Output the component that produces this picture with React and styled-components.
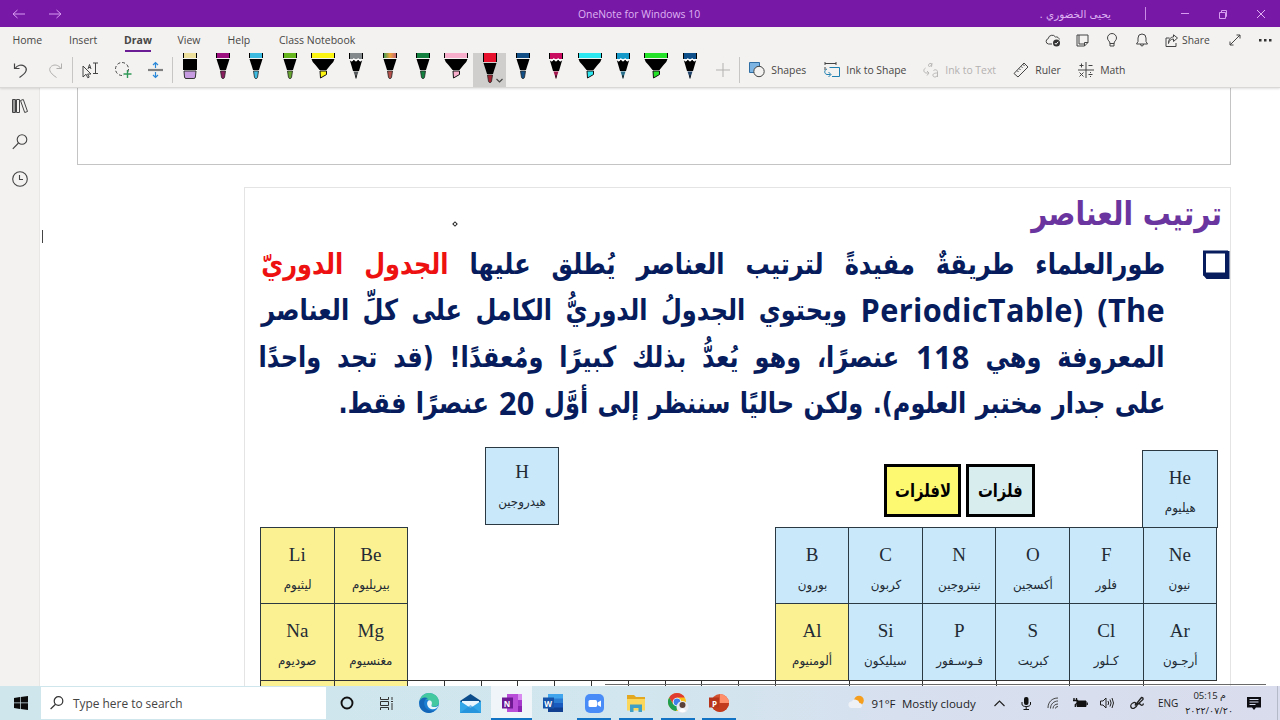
import React from "react"
import styled, { createGlobalStyle } from "styled-components"

const GlobalStyle = createGlobalStyle`
    body {
        margin: 0;
        overflow: hidden;
        font-family: "Open Sans", "DejaVu Sans", sans-serif;
        background: #fff;
    }

    * {
        box-sizing: border-box;
    }

    svg {
        display: block;
        overflow: visible;
        flex: none;
    }
`

const PENS = [
    { type: "eraser", color: "#ecdf9c", tip: "#c79be0" },
    { type: "pen", color: "#9b0f7e", tip: "#8a1f5f" },
    { type: "pen", color: "#3dbbe0", tip: "#3dbbe0" },
    { type: "pen", color: "#66b51f", tip: "#66a52f" },
    { type: "marker", color: "#fbf312", tip: "#fbf312" },
    { type: "pencil", color: "#84898b", tip: "#55585a" },
    { type: "pen", color: "url(#rainbow)", tip: "#b5504a" },
    { type: "pen", color: "#13803f", tip: "#13803f" },
    { type: "marker", color: "#f6aecb", tip: "#f6aecb" },
    { type: "pen", color: "#e8112d", tip: "#a5202f", selected: true },
    { type: "pen", color: "#124f86", tip: "#124f86" },
    { type: "pencil", color: "#c90c60", tip: "#a3174f" },
    { type: "marker", color: "#2ce6f0", tip: "#2ce6f0" },
    { type: "pencil", color: "#1499c8", tip: "#28708c" },
    { type: "marker", color: "#24e228", tip: "#24e228" },
    { type: "pencil", color: "#0f4f8a", tip: "#24456a" },
]

const ELEMENTS = [
    { symbol: "Li", name: "ليثيوم", col: 1, row: 1, metal: true },
    { symbol: "Be", name: "بيريليوم", col: 2, row: 1, metal: true },
    { symbol: "B", name: "بورون", col: 8, row: 1 },
    { symbol: "C", name: "كربون", col: 9, row: 1 },
    { symbol: "N", name: "نيتروجين", col: 10, row: 1 },
    { symbol: "O", name: "أكسجين", col: 11, row: 1 },
    { symbol: "F", name: "فلور", col: 12, row: 1 },
    { symbol: "Ne", name: "نيون", col: 13, row: 1 },
    { symbol: "Na", name: "صوديوم", col: 1, row: 2, metal: true },
    { symbol: "Mg", name: "مغنسيوم", col: 2, row: 2, metal: true },
    { symbol: "Al", name: "ألومنيوم", col: 8, row: 2, metal: true },
    { symbol: "Si", name: "سيليكون", col: 9, row: 2 },
    { symbol: "P", name: "فـوسـفور", col: 10, row: 2 },
    { symbol: "S", name: "كبريت", col: 11, row: 2 },
    { symbol: "Cl", name: "كـلور", col: 12, row: 2 },
    { symbol: "Ar", name: "أرجـون", col: 13, row: 2 },
]

const Icon = ({ w = 16, h = w, sw = 1, color = "#444", children }) => (
    <svg
        width={w}
        height={h}
        viewBox={`0 0 ${w} ${h}`}
        fill="none"
        stroke={color}
        strokeWidth={sw}
    >
        {children}
    </svg>
)

const Pen = ({ type, color, tip, selected }) => {
    if (type === "eraser") {
        return (
            <Icon w={14} h={26} color="none">
                <path d="M0 0h14v5H0z" fill={color} />
                <path d="M0 0h1v5H0zM13 0h1v5h-1zM0 6h14v11H0z" fill="#000" />
                <path d="M1 18h12l-.6 6q-.2 1.500-1.500 1.500H3q-1.300 0-1.500-1.500z" fill={tip} stroke="#333" />
            </Icon>
        )
    }
    if (type === "marker") {
        return (
            <Icon w={24} h={26} color="none">
                <path d="M0 0h24v5H0z" fill={color} />
                <path d="M0 0h1v5H0zM23 0h1v5h-1zM.5 6h23q-.5 3-4 6l-4 5h-7l-4-5q-3.500-3-4-6z" fill="#000" />
                <path d="M9 18h6.500v3.500L9.500 25z" fill={tip} stroke="#111" strokeWidth="1" />
            </Icon>
        )
    }
    if (type === "pencil") {
        return (
            <Icon w={14} h={26} color="none">
                <path d="M0 0h14v6H0z" fill={color} />
                <path d="M0 0h1v6H0zM13 0h1v6h-1z" fill="#000" />
                <path d="M.8 7l2 1.500 2-2 2.200 2 2.200-2 2 2 2-1.500L10 18H4z" fill="#000" />
                <path d="M.6 6.200l2.200 1.600 2-2 2.200 2 2.200-2 2 2 2.200-1.600" stroke="#fff" strokeWidth="1.200" />
                <path d="M4.500 18.500h5L7 26z" fill={tip} />
                <path d="M6 22.500h2L7 26z" fill="#111" />
            </Icon>
        )
    }
    const drop = selected ? 4 : 0
    return (
        <Icon w={14} h={26 + drop} color="none">
            <path d={`M0 0h14v${5 + drop}H0z`} fill={color} />
            <path d={`M0 0h1v${5 + drop}H0zM13 0h1v${5 + drop}h-1z`} fill="#000" />
            <g transform={`translate(0 ${drop})`}>
                <path d="M.5 6h13L10 17H4z" fill="#000" />
                <path d="M4.500 18h5l-1 6.500q-.3 1-1.500 1t-1.500-1z" fill={tip} stroke="#222" strokeWidth=".8" />
            </g>
        </Icon>
    )
}

const Element = ({ symbol, name, metal, col, row, $w, $h, $top }) => (
    <Cell $metal={metal} $w={$w} $h={$h} $top={$top} style={col ? { gridColumn: col, gridRow: row } : undefined}>
        <Symbol>{symbol}</Symbol>
        <ElementName>{name}</ElementName>
    </Cell>
)

const TitleBar = () => (
    <Title>
        <Slot $w={37}>
            <Icon w={14} h={10} color="#d79bf0"><path d="M13 5H1M5.500 1L1 5l4.500 4" /></Icon>
        </Slot>
        <Slot $w={36}>
            <Icon w={14} h={10} color="#d79bf0"><path d="M1 5h12M8.500 1L13 5 8.500 9" /></Icon>
        </Slot>
        <AppName>OneNote for Windows 10</AppName>
        <UserName dir="rtl">يحيى الخضوري .</UserName>
        <TitleDivider />
        <Slot $w={38}><Icon w={10} color="#d79bf0"><path d="M1 4.500h8" /></Icon></Slot>
        <Slot $w={38}>
            <Icon w={10} color="#d79bf0"><path d="M1.500 3.500h6v6h-6zM3.500 3V1.500h5v6H8" /></Icon>
        </Slot>
        <Slot $w={38}><Icon w={10} color="#e0b0f3"><path d="M1 1l8 8M9 1L1 9" /></Icon></Slot>
    </Title>
)

const Tabs = () => (
    <TabRow>
        <Tab $w={56.500}>Home</Tab>
        <Tab $w={55}>Insert</Tab>
        <Tab $w={53.500} $active>Draw</Tab>
        <Tab $w={50}>View</Tab>
        <Tab $w={51.500}>Help</Tab>
        <Tab $w={120}>Class Notebook</Tab>
        <TabActions>
            <Slot $w={30}>
                <Icon w={16} h={14}>
                    <path d="M7 11H3.500a2.700 2.700 0 0 1-.3-5.300A4 4 0 0 1 10.500 4a3 3 0 0 1 3.800 2.500" />
                    <circle cx="11.500" cy="10" r="3.500" fill="#333" stroke="none" />
                    <path d="M9.800 10l1.200 1.300 2.200-2.500" stroke="#fff" />
                </Icon>
            </Slot>
            <Slot $w={29}>
                <Icon w={13}>
                    <path d="M1 1h11v7.500L8.500 12H1zM8.500 12V8.500H12M3 1v9h5.500" />
                </Icon>
            </Slot>
            <Slot $w={30}>
                <Icon w={12} h={14}>
                    <path d="M4 10.500C4 8 1.500 7.800 1.500 5a4.500 4.500 0 0 1 9 0c0 2.800-2.500 3-2.500 5.500zM4 10v3h4v-3" />
                </Icon>
            </Slot>
            <Slot $w={30}>
                <Icon w={12} h={14}>
                    <path d="M.5 11h11L10 8.500V5a4 4 0 0 0-8 0v3.500zM4.500 11q0 2 1.500 2t1.500-2" />
                </Icon>
            </Slot>
            <Share>
                <Icon w={14} h={13}>
                    <path d="M4.500 4H1v8.500h10V9M3.500 9.500c.5-3 2.500-4.500 5-4.500V7.500L12.500 4 8.500.8V3C5 3 3.500 6 3.500 9.500z" />
                </Icon>
                Share
            </Share>
            <Slot $w={30}>
                <Icon w={12}><path d="M1 11L11 1M7.500 1H11v3.500M1 7.500V11h3.500" /></Icon>
            </Slot>
            <Slot $w={30}>
                <Icon w={13} h={4} color="none">
                    <path d="M0 1h2.500v2.500H0zM5 1h2.500v2.500H5zM10 1h2.500v2.500H10z" fill="#333" />
                </Icon>
            </Slot>
        </TabActions>
    </TabRow>
)

const Toolbar = () => (
    <Tools>
        <Slot $w={34}>
            <Icon w={16} sw={1.200}><path d="M1.500 1.500v5h5M2 6.500C4.500 3 8.500 2 11.500 4.200c3.200 2.500 2.600 6.300-5 11.300" /></Icon>
        </Slot>
        <Slot $w={34}>
            <Icon w={16} color="#b0afae"><path d="M14.500 1.500v5h-5M14 6.500C11.500 3 7.500 2 4.500 4.200c-3.200 2.500-2.600 6.300 5 11.300" /></Icon>
        </Slot>
        <ToolDivider />
        <Slot $w={33}>
            <Icon w={16}>
                <path d="M1 4v11l3-2.800 1.800 3.600 1.400-.7L5.600 12H9zM6 7l1.500-4.500L9 7M6.500 5.500h2M11 1h5M11 11.500h5M13.500 1v10.500" />
            </Icon>
        </Slot>
        <Slot $w={33}>
            <Icon w={16}>
                <circle cx="7" cy="7" r="6.500" strokeDasharray="3 2" />
                <path d="M9 10h8v5H9z" fill="#f3f2f1" stroke="none" />
                <path d="M12.500 8v8M8.500 12h8" stroke="#2f9a57" strokeWidth="1.400" />
            </Icon>
        </Slot>
        <Slot $w={33}>
            <Icon w={15} h={16} sw={1.200} color="#2b88d8">
                <path d="M7.500 6V1M5 3l2.500-2.500L10 3M7.500 10v5M5 13l2.500 2.500L10 13" />
                <path d="M0 8h15" stroke="#808080" strokeWidth="2.200" />
            </Icon>
        </Slot>
        <ToolDivider />
        {PENS.map((pen, i) => (
            <PenSlot key={i} $selected={pen.selected}>
                <Pen {...pen} />
                {pen.selected && (
                    <PenArrow>
                        <Icon w={7} h={5} sw={1.200}><path d="M.5 1l3 3 3-3" /></Icon>
                    </PenArrow>
                )}
            </PenSlot>
        ))}
        <Slot $w={33}>
            <Icon w={14} color="#b3b1af"><path d="M7 0v14M0 7h14" /></Icon>
        </Slot>
        <ToolDivider />
        <Command $w={75} $first>
            <Icon w={16}>
                <path d="M.5.5h10v10H.5z" fill="#7cb4e3" stroke="#2f6da5" />
                <circle cx="10" cy="9.500" r="5.200" fill="#f3f2f1" />
            </Icon>
            Shapes
        </Command>
        <Command $w={99}>
            <Icon w={16}>
                <path d="M1 0v3M1 1.500h11M12 0v3M1 5v3" />
                <path d="M5.500 5.500h10v9H8M3 7C0 8 0 12 3 12.500h3.500M4.500 10l2.500 2.500L4.500 15" stroke="#1e7fb0" />
            </Icon>
            Ink to Shape
        </Command>
        <Command $w={90} $disabled>
            <Icon w={16} color="#b9b7b5">
                <path d="M8.500 1.500c-3-1-4 3-2 3s2-3 2.500-3l-.5 3.300M2.500 6C0 7.500.5 10.500 3 11h2.500M4 9l2 2-2 2.500M10.500 8.500c2-1.500 4-.5 4 1.500v5M14.500 11c-3 0-5 .7-4.500 2.800.5 1.800 4 1.500 4.500-.8" />
            </Icon>
            Ink to Text
        </Command>
        <Command $w={65}>
            <Icon w={16}><path d="M1 11.500L11 1l4 4L5 15zM4 8.500l1.500 1.500M6 6.500l1.500 1.500M8 4.300l1.500 1.500M10 2.300L11.500 4" /></Icon>
            Ruler
        </Command>
        <Command $w={60}>
            <Icon w={16}>
                <path d="M8 0v16M0 8h16M3.500 1.500v4M1.500 3.500h4M10.500 3.500h4M1.500 10.500l4 4M5.500 10.500l-4 4M10.500 12.500h4M12.500 10v1M12.500 14v1" />
            </Icon>
            Math
        </Command>
    </Tools>
)

const SideBar = () => (
    <Side>
        <Icon w={16} h={14}>
            <path d="M.5.5h3v13h-3zM4.500.5h3v13h-3zM8.500 1.500l2.800-1 4.200 12-2.800 1zM2 .5v13" />
        </Icon>
        <Icon w={16} sw={1.100}><circle cx="10" cy="5.500" r="4.800" /><path d="M6.500 9L.8 14.800" /></Icon>
        <Icon w={16} sw={1.100}><circle cx="8" cy="8" r="7.300" /><path d="M7.500 4v4.500H11" /></Icon>
    </Side>
)

const Document = () => (
    <Canvas>
        <CaretMark />
        <EmptyFrame />
        <Slide dir="rtl">
            <Pointer />
            <Heading>ترتيب العناصر</Heading>
            <Bullet>
                <Icon w={28} color="#061c5c">
                    <path d="M2.500 2h22v22h-22z" strokeWidth="3" />
                    <path d="M25 1h2.500v28H4.500L1 25h24z" fill="#061c5c" stroke="none" />
                </Icon>
                <Paragraph>
                    <Line $w={904}>
                        طورالعلماء طريقةٌ مفيدةً لترتيب العناصر يُطلق عليها <Red>الجدول الدوريّ</Red>
                    </Line>
                    <Line $w={904}>
                        <Latin dir="ltr" $extra={9}>(The</Latin> <Latin dir="ltr" $extra={29}>PeriodicTable)</Latin> ويحتوي الجدولُ الدوريُّ الكامل على كلِّ العناصر
                    </Line>
                    <Line $w={906}>
                        المعروفة وهي <Latin $extra={8}>118</Latin> عنصرًا، وهو يُعدُّ بذلك كبيرًا ومُعقدًا! (قد تجد واحدًا
                    </Line>
                    <Line $w={827}>
                        على جدار مختبر العلوم). ولكن حاليًا سننظر إلى أوَّل <Latin $extra={5}>20</Latin> عنصرًا فقط.
                    </Line>
                </Paragraph>
            </Bullet>
            <Periodic dir="ltr">
                <FirstPeriod>
                    <Element symbol="H" name="هيدروجين" $w={74} $h={78} $top={-3} />
                    <Legend>
                        <LegendBox $w={77} $color="#fdf971"><Narrow>لافلزات</Narrow></LegendBox>
                        <LegendBox $w={69} $color="#d8eeee"><Narrow>فلزات</Narrow></LegendBox>
                    </Legend>
                    <HeliumSlot>
                        <Element symbol="He" name="هيليوم" $w={75.500} $h={78} />
                    </HeliumSlot>
                </FirstPeriod>
                <Table>
                    {ELEMENTS.map(el => (
                        <Element key={el.symbol} {...el} />
                    ))}
                </Table>
                <NextPeriod>
                    <Stub $w={73.500} $metal />
                    <Stub $w={73.500} $metal />
                    {Array.from({ length: 10 }, (_, i) => (
                        <Stub key={i} $w={36.800} />
                    ))}
                    {Array.from({ length: 6 }, (_, i) => (
                        <Stub key={i} $w={73.600} />
                    ))}
                    <Rule />
                </NextPeriod>
            </Periodic>
        </Slide>
    </Canvas>
)

const TaskBar = () => (
    <Bar>
        <Slot $w={41}>
            <Icon w={14} color="none">
                <path d="M0 2l6-.9v5.500H0zM6.700 1L14 0v6.600H6.700zM0 7.300h6v5.600L0 12zM6.700 7.300H14V14l-7.300-1z" fill="#0b0b0b" />
            </Icon>
        </Slot>
        <Search>
            <Icon w={14} sw={1.200} color="#333"><circle cx="8.500" cy="5" r="4.300" /><path d="M5.500 8.200L.6 13" /></Icon>
            Type here to search
        </Search>
        <Slot $w={41}>
            <Icon w={14} sw={1.900} color="#111"><circle cx="7" cy="7" r="5.500" /></Icon>
        </Slot>
        <Slot $w={40}>
            <Icon w={14} h={13} color="#333"><path d="M.5 0v2.500h8V0M.5 13v-2.500h8V13M.5 4.500h8v4h-8zM12 0v3M12 6v7M11 4.500h2" /></Icon>
        </Slot>
        <AppSlot $w={43}>
            <Icon w={20} color="none">
                <circle cx="10" cy="10" r="10" fill="#1b7fd3" />
                <path d="M.5 8C2 2 7-.5 12 .2c5 .8 8 4.800 8 9 0 4-5.500 5.800-8 3.800 2-3-1-6.500-4-6.500S2 7 .5 8z" fill="#43c8a0" />
                <path d="M.3 8.500C2 4.500 6 3.500 9 5.500c-4 .5-5 5-2.500 9 1.500 2.500 6 4 9.500 3-5 4.500-13 2.500-15.300-4z" fill="#1466b8" />
                <path d="M10 7.200c2 0 3.200 1.500 2.900 3.500-.3 1.500-1 2.300.3 3 2 .8 4.500.3 6.300-1-1 2.200-3.500 4-6.500 3.500-5-.8-6.500-7.500-3-9z" fill="#e8f5fa" />
            </Icon>
        </AppSlot>
        <AppSlot $w={41}>
            <Icon w={21} h={19} color="none">
                <path d="M0 7L10.500 0 21 7v3H0z" fill="#0d4d8b" />
                <path d="M2 7h17v6H2z" fill="#e9f6fd" />
                <path d="M0 7l10.500 7L21 7v12H0z" fill="#33a6e8" />
                <path d="M0 19l10.500-8L21 19z" fill="#1f8ad6" opacity=".6" />
            </Icon>
        </AppSlot>
        <AppSlot $w={41} $active $underline={41}>
            <Icon w={20} h={18} color="none">
                <path d="M5 0h15v18H5z" fill="#b94ed8" />
                <path d="M16 0h4v6h-4z" fill="#d98af0" /><path d="M16 6h4v6h-4z" fill="#a638cb" /><path d="M16 12h4v6h-4z" fill="#8a24b0" />
                <path d="M0 3.500h11v11H0z" fill="#6d1a94" />
            </Icon>
            <AppLetter>N</AppLetter>
        </AppSlot>
        <AppSlot $w={41}>
            <Icon w={20} h={18} color="none">
                <path d="M5 0h15v18H5z" fill="#2b7cd3" />
                <path d="M5 0h15v4.500H5z" fill="#41a5ee" /><path d="M5 9h15v9H5z" fill="#185abd" /><path d="M5 13.500h15V18H5z" fill="#103f91" />
                <path d="M0 3.500h11v11H0z" fill="#1753a8" />
            </Icon>
            <AppLetter>W</AppLetter>
        </AppSlot>
        <AppSlot $w={42} $underline={34}>
            <Icon w={19} color="none">
                <rect width="19" height="19" rx="5" fill="#4a8cf7" />
                <rect x="3.500" y="6" width="8.500" height="7" rx="1.500" fill="#fff" />
                <path d="M12.500 8.500l3.500-2v6.500l-3.500-2z" fill="#fff" />
            </Icon>
        </AppSlot>
        <AppSlot $w={42} $underline={34}>
            <Icon w={20} h={17} color="none">
                <path d="M1 0h7l2 2h9v13H1z" fill="#e3a820" />
                <path d="M1 4h18v11.500H1z" fill="#fbd75b" />
                <path d="M4 17V9.500h12V17h-3.500v-4h-5v4z" fill="#3f9fc4" />
            </Icon>
        </AppSlot>
        <AppSlot $w={42} $underline={34}>
            <Icon w={20} color="none">
                <circle cx="9" cy="9" r="9" fill="#fbc116" />
                <path d="M1.200 4.500A9 9 0 0 1 16.800 4.500H9L4.800 10.500z" fill="#e03c31" />
                <path d="M1.200 4.500A9 9 0 0 0 8 18l4.500-7H5z" fill="#1e9e50" />
                <circle cx="9" cy="9" r="4.300" fill="#fff" /><circle cx="9" cy="9" r="3.400" fill="#3f7fe8" />
                <circle cx="14.500" cy="14" r="6" fill="#e9eaf0" />
                <circle cx="14.500" cy="12" r="3" fill="#5a4038" /><path d="M11 18q3.500-5 7 0-3.500 2.500-7 0z" fill="#fff" />
            </Icon>
        </AppSlot>
        <AppSlot $w={40} $underline={34}>
            <Icon w={20} h={18} color="none">
                <circle cx="11" cy="9" r="9" fill="#d35230" />
                <path d="M11 0a9 9 0 0 1 9 9h-9z" fill="#ff8f6b" /><path d="M2 9h18a9 9 0 0 1-18 0z" fill="#c13b1c" />
                <path d="M0 3.500h10v10H0z" fill="#b7351a" />
            </Icon>
            <AppLetter>P</AppLetter>
        </AppSlot>
        <Weather>
            <Icon w={17} h={14} color="none">
                <circle cx="11" cy="4.500" r="4.800" fill="#f59d1c" />
                <path d="M3 12a3.300 3.300 0 0 1 .5-6.500 4.500 4.500 0 0 1 8 1.500 2.600 2.600 0 0 1 1 5z" fill="#eef1f6" />
            </Icon>
            <span>91°F</span>
            <span>Mostly cloudy</span>
        </Weather>
        <Slot $w={26}><Icon w={11} h={7} sw={1.200} color="#222"><path d="M.5 6l5-5 5 5" /></Icon></Slot>
        <Slot $w={27}>
            <Icon w={10} h={13} color="#111">
                <rect x="3" y="0" width="4.500" height="8" rx="2" fill="#111" stroke="none" />
                <path d="M1 5v2q0 2.500 4.200 2.500T9.500 7V5M5.200 9.500v3M2.500 12.500h5.500" />
            </Icon>
        </Slot>
        <Slot $w={28}>
            <Icon w={12} color="#444"><path d="M1 11C1 5 5 1 11 1M3.500 11.500C3.500 7 7 4 11 4M6 11.500C6 9 8 7 11 7M8.500 11.500q0-2 2.500-2" /></Icon>
        </Slot>
        <Slot $w={26}>
            <Icon w={14} h={10} color="#111">
                <path d="M4 3h9v5.500H4z" fill="#111" /><path d="M14.200 4.500v2.500M1 0v2.500M3.500 0v2.500M0 2.500h4.500V5L2.300 6.500V9" strokeWidth="1.300" />
            </Icon>
        </Slot>
        <Slot $w={28}>
            <Icon w={14} h={12} color="#222"><path d="M.5 4v4H3l3 3V1L3 4zM8 4q1.300 2 0 4M10 2.500q2.200 3.500 0 7M12 1q3 5 0 10" /></Icon>
        </Slot>
        <Slot $w={31}>
            <Icon w={14} sw={1.300} color="#222"><path d="M5 9.500L11.500 1.500q2 0 1.500 2L7 9M5 9.500C8 4 0 7 .8 10.500 1.500 14 6 12.500 7.500 8.500q1-2 3 0t3-1" /></Icon>
        </Slot>
        <Tray>ENG</Tray>
        <Clock>
            <span>05:15 م</span>
            <span>٢٠٢٢/٠٧/٢٠</span>
        </Clock>
        <Slot $w={34}>
            <Icon w={14} h={13} color="none">
                <path d="M0 0h14v10.500H9L7 13l-2-2.500H0z" fill="#0d0d12" />
                <path d="M2.500 2.500h9M2.500 5h9M2.500 7.500h6" stroke="#d7dcec" />
            </Icon>
        </Slot>
        <DesktopEdge />
    </Bar>
)

export default () => (
    <Window>
        <GlobalStyle />
        <svg width="0" height="0">
            <linearGradient id="rainbow">
                <stop offset="0" stopColor="#2c9a57" />
                <stop offset=".5" stopColor="#f0a53c" />
                <stop offset="1" stopColor="#b95a7a" />
            </linearGradient>
        </svg>
        <TitleBar />
        <Ribbon>
            <Tabs />
            <Toolbar />
        </Ribbon>
        <Main>
            <SideBar />
            <Document />
        </Main>
        <TaskBar />
    </Window>
)

const Window = styled.div`
    width: 1280px;
    height: 720px;
    display: flex;
    flex-direction: column;
    overflow: hidden;
`

const Slot = styled.div`
    width: ${p => p.$w}px;
    flex: none;
    display: flex;
    align-items: center;
    justify-content: center;
`

const Title = styled.header`
    height: 27px;
    flex: none;
    display: flex;
    align-items: center;
    background: #7719a6;
    color: #dfb3f3;
`

const AppName = styled.div`
    width: 883px;
    padding: 1px 0 0 505px;
    font-size: 10.400px;
    white-space: nowrap;
`

const UserName = styled.div`
    width: 155px;
    font-family: "DejaVu Sans", sans-serif;
    font-size: 10.400px;
    white-space: nowrap;
`

const TitleDivider = styled.div`
    width: 1px;
    height: 13px;
    margin: 0 20px 0 34px;
    background: #c98be6;
`

const Ribbon = styled.div`
    height: 61px;
    flex: none;
    background: #f3f2f1;
    border-bottom: 1px solid #d9d8d7;
    box-shadow: 0 1px 2px rgba(0, 0, 0, 0.12);
    z-index: 1;
`

const TabRow = styled.nav`
    height: 26px;
    display: flex;
    padding-left: 12.500px;
    color: #484644;
    font-size: 10.500px;
`

const Tab = styled.div`
    width: ${p => p.$w}px;
    flex: none;
    padding-top: 5px;
    line-height: 16px;
    white-space: nowrap;
    font-weight: ${p => (p.$active ? 700 : 400)};

    &::after {
        content: "";
        display: ${p => (p.$active ? "block" : "none")};
        width: 26px;
        height: 2px;
        margin: 2px 0 0 1px;
        background: #6b1d96;
    }
`

const TabActions = styled.div`
    display: flex;
    margin-left: auto;
    height: 26px;
`

const Share = styled.div`
    width: 63px;
    display: flex;
    align-items: center;
    gap: 3px;
    padding-left: 8px;
    font-size: 10.300px;
`

const Tools = styled.div`
    height: 34px;
    padding-left: 4px;
    display: flex;
    align-items: stretch;
`

const ToolDivider = styled.div`
    width: 1px;
    flex: none;
    margin: 4px 0;
    background: #c8c6c4;
`

const PenSlot = styled.div`
    width: 33.330px;
    flex: none;
    display: flex;
    justify-content: center;
    position: relative;
    background: ${p => (p.$selected ? "#cfcecc" : "none")};
`

const PenArrow = styled.div`
    position: absolute;
    right: 3px;
    bottom: 4px;
`

const Command = styled.div`
    width: ${p => p.$w}px;
    flex: none;
    margin-left: ${p => (p.$first ? 9 : 0)}px;
    display: flex;
    align-items: center;
    gap: 6px;
    font-size: 10.400px;
    white-space: nowrap;
    color: ${p => (p.$disabled ? "#b3b1af" : "#484644")};
`

const Main = styled.main`
    height: 598px;
    flex: none;
    display: flex;
`

const Side = styled.aside`
    width: 40px;
    flex: none;
    padding: 11px 0 0 12px;
    display: flex;
    flex-direction: column;
    gap: 21px;
    background: #f3f2f1;
    border-right: 1px solid #e8e7e5;
`

const Canvas = styled.div`
    flex: 1;
    position: relative;
    overflow: hidden;
    padding-right: 49px;
    display: flex;
    flex-direction: column;
    align-items: flex-end;
    background: #fff;
`

const CaretMark = styled.div`
    position: absolute;
    left: 2px;
    top: 142px;
    width: 1px;
    height: 13px;
    background: #444;
`

const EmptyFrame = styled.div`
    width: 1154px;
    height: 77px;
    flex: none;
    border: 1px solid #c4c4c4;
    border-top: 0;
`

const Slide = styled.section`
    width: 987px;
    height: 520px;
    flex: none;
    margin-top: 22px;
    position: relative;
    border: 1px solid #e4e4e4;
`

const Pointer = styled.div`
    position: absolute;
    left: 208px;
    top: 34px;
    width: 4px;
    height: 4px;
    border: 1px solid #222;
    transform: rotate(45deg);
`

const Heading = styled.h1`
    margin: 0;
    padding: 3px 8px 0 0;
    height: 53px;
    font: bold 33px/46px "DejaVu Sans", sans-serif;
    color: #6b35a0;
    transform: scaleX(0.845);
    transform-origin: calc(100% - 8px) 0;
`

const Bullet = styled.div`
    display: flex;
    gap: 37px;

    > svg {
        margin-top: 9px;
    }
`

const Paragraph = styled.div`
    width: 906px;
    font: bold 29px/46.300px "DejaVu Sans", sans-serif;
    color: #061c5c;
`

/* condensed Arabic, the box keeps its drawn width after scaling */
const Line = styled.div`
    width: ${p => p.$w / 0.83}px;
    height: 46.300px;
    white-space: nowrap;
    text-align-last: justify;
    transform: scaleX(0.83);
    transform-origin: right;
`

const Red = styled.span`
    color: #ee1111;
`

/* undoes most of the line's squeeze, $extra makes room for it */
const Latin = styled.bdi`
    display: inline-block;
    margin-left: ${p => p.$extra}px;
    font-family: "Open Sans", sans-serif;
    font-size: 33px;
    line-height: 0;
    letter-spacing: 0.400px;
    vertical-align: -2px;
    transform: scaleX(1.12);
    transform-origin: right;
`

const Periodic = styled.div`
    margin-top: 21px;
    padding-left: 15px;
`

const FirstPeriod = styled.div`
    height: 80px;
    display: flex;
    padding-left: 225px;
`

const Legend = styled.div`
    display: flex;
    gap: 5px;
    margin: 17px 107px 0 325px;
`

const LegendBox = styled.div`
    width: ${p => p.$w}px;
    height: 53px;
    display: flex;
    align-items: center;
    justify-content: center;
    background: ${p => p.$color};
    border: 3px solid #000;
    color: #000;
    font: bold 18px "DejaVu Sans", sans-serif;
`

const Narrow = styled.span`
    white-space: nowrap;
    transform: scaleX(0.82);
`

const HeliumSlot = styled.div`
    padding-top: 3px;
`

const Table = styled.div`
    display: grid;
    grid-template-columns: repeat(13, 73.550px);
    grid-template-rows: 76px 77px;
`

const Cell = styled.div`
    width: ${p => (p.$w ? `${p.$w}px` : "calc(100% + 1px)")};
    height: ${p => (p.$h ? `${p.$h}px` : "calc(100% + 1px)")};
    padding-top: ${p => 15 + (p.$top || 0)}px;
    display: flex;
    flex-direction: column;
    align-items: center;
    border: 1px solid #2b3a42;
    background: ${p => (p.$metal ? "#fcf192" : "#c9e9fa")};
    color: #222b35;
`

const Symbol = styled.div`
    font: 19px/24px "Liberation Serif", serif;
`

const ElementName = styled.div`
    padding-top: 8px;
    font: 12.500px/20px "DejaVu Sans", sans-serif;
    white-space: nowrap;
    transform: scaleX(0.95);
`

const NextPeriod = styled.div`
    width: 957px;
    height: 8px;
    display: flex;
    position: relative;
    border-top: 1.500px solid #333;
    border-right: 1px solid #333;
`

const Stub = styled.div`
    width: ${p => p.$w}px;
    flex: none;
    border-left: 1px solid #333;
    background: ${p => (p.$metal ? "#fcf192" : "#fff")};
`

const Rule = styled.div`
    position: absolute;
    left: 345px;
    top: 3px;
    width: 661px;
    height: 1px;
    background: #6a6a6a;
`

const Bar = styled.footer`
    height: 34px;
    flex: none;
    display: flex;
    background: linear-gradient(90deg, #cfe6ed, #d1e6ee 50%, #d7e0ef 70%, #d9dcec);
    color: #1d1d25;
`

const Search = styled.div`
    width: 285px;
    flex: none;
    margin: 1px 0;
    padding-left: 9px;
    display: flex;
    align-items: center;
    gap: 9px;
    background: #fff;
    color: #444;
    font-size: 11.900px;
`

const AppSlot = styled(Slot)`
    position: relative;
    background: ${p => (p.$active ? "#f0f5fa" : "none")};

    &::after {
        content: "";
        position: absolute;
        bottom: 0;
        left: calc(50% - ${p => (p.$underline || 0) / 2}px);
        width: ${p => p.$underline || 0}px;
        height: 2px;
        background: #1273c4;
    }
`

const AppLetter = styled.span`
    position: absolute;
    left: calc(50% - 10px);
    width: 11px;
    text-align: center;
    color: #fff;
    font-size: 8px;
    font-weight: 700;
`

const Weather = styled.div`
    width: 138px;
    flex: none;
    margin-left: 109px;
    display: flex;
    align-items: center;
    gap: 6.500px;
    font-size: 11.500px;
    white-space: nowrap;
`

const Tray = styled.div`
    width: 30px;
    flex: none;
    display: flex;
    align-items: center;
    padding-left: 6px;
    font-size: 10px;
`

const Clock = styled.div`
    width: 55px;
    flex: none;
    display: flex;
    flex-direction: column;
    align-items: flex-end;
    padding: 2px 4px 0 0;
    font: 9.500px/15px "Open Sans", "DejaVu Sans", sans-serif;
    white-space: nowrap;

    span:first-child {
        padding-right: 7px;
    }
`

const DesktopEdge = styled.div`
    width: 1px;
    height: 34px;
    margin-left: 6px;
    background: #b5bac8;
`
